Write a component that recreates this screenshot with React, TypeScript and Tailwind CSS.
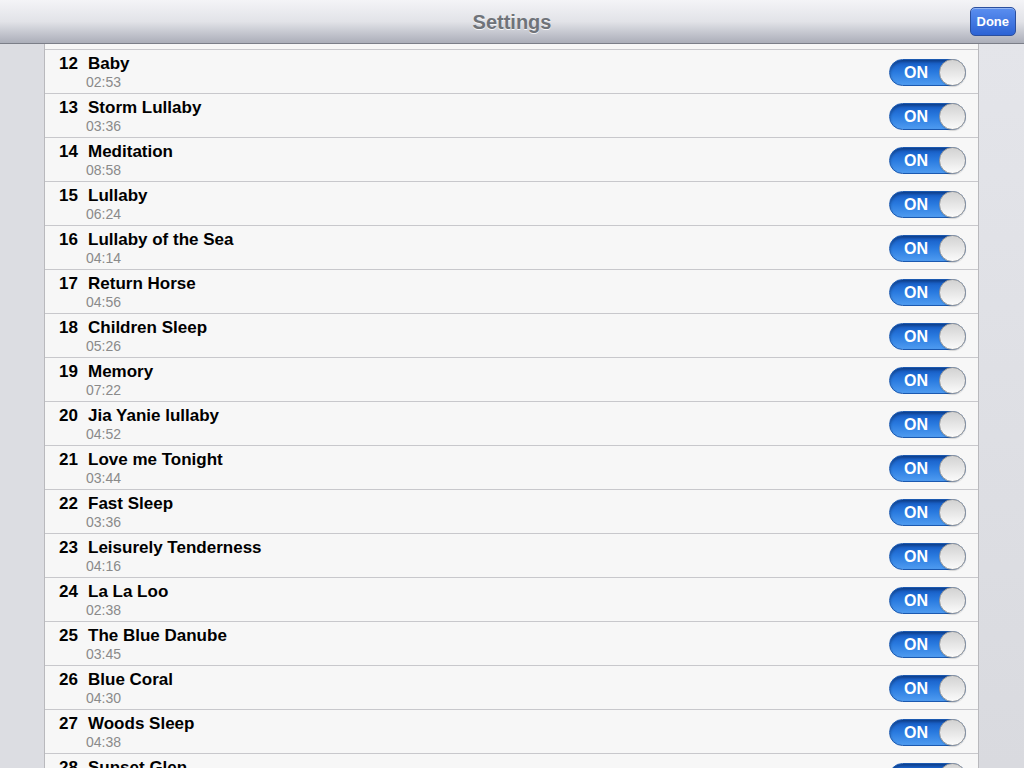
const songs = [
  { n: 12, title: "Baby", time: "02:53" },
  { n: 13, title: "Storm Lullaby", time: "03:36" },
  { n: 14, title: "Meditation", time: "08:58" },
  { n: 15, title: "Lullaby", time: "06:24" },
  { n: 16, title: "Lullaby of the Sea", time: "04:14" },
  { n: 17, title: "Return Horse", time: "04:56" },
  { n: 18, title: "Children Sleep", time: "05:26" },
  { n: 19, title: "Memory", time: "07:22" },
  { n: 20, title: "Jia Yanie lullaby", time: "04:52" },
  { n: 21, title: "Love me Tonight", time: "03:44" },
  { n: 22, title: "Fast Sleep", time: "03:36" },
  { n: 23, title: "Leisurely Tenderness", time: "04:16" },
  { n: 24, title: "La La Loo", time: "02:38" },
  { n: 25, title: "The Blue Danube", time: "03:45" },
  { n: 26, title: "Blue Coral", time: "04:30" },
  { n: 27, title: "Woods Sleep", time: "04:38" },
  { n: 28, title: "Sunset Glen", time: "03:12" },
];

function Toggle() {
  return (
    <div className="relative mt-[2px] w-[77px] h-[27px] rounded-full border border-[#1b59b0] bg-gradient-to-b from-[#1458c2] via-[#2a7be0] to-[#4e9bf0] shadow-[inset_0_2px_3px_rgba(0,0,0,0.3)]">
      <span className="absolute left-[14px] top-[3px] text-[16px] leading-[20px] font-bold text-white">
        ON
      </span>
      <div className="absolute right-[-1px] top-[-1px] w-[27px] h-[27px] rounded-full border border-[#9a9a9a] bg-gradient-to-b from-[#d2d2d2] to-[#fbfbfb] shadow-[0_1px_1px_rgba(0,0,0,0.15)]" />
    </div>
  );
}

export default function App() {
  return (
    <div
      className="w-[1024px] h-[768px] overflow-hidden flex flex-col bg-[#dfe0e5]"
      style={{ fontFamily: '"Liberation Sans", Arial, sans-serif' }}
    >
      <header className="relative h-[44px] shrink-0 flex items-center justify-center bg-gradient-to-b from-[#f4f4f7] via-[#e2e3e8] to-[#abaeb9] border-b border-[#7b7e88]">
        <h1 className="text-[20px] font-bold text-[#6f7379] [text-shadow:0_1px_0_rgba(255,255,255,0.8)]">
          Settings
        </h1>
        <button className="absolute right-[8px] top-[7px] h-[29px] px-[6px] rounded-[5px] border border-[#2b4f9e] bg-gradient-to-b from-[#5b8ff0] to-[#2d63d4] text-[13px] font-bold text-white shadow-[inset_0_1px_0_rgba(255,255,255,0.35)]">
          Done
        </button>
      </header>

      <div className="flex flex-1 min-h-0">
        <div className="w-[44px] shrink-0 bg-[#dcdde2]" />
        <div className="w-[935px] shrink-0 bg-[#f7f7f7] border-x border-[#b9b9bd] overflow-hidden">
          <div className="h-[5px]" />
          {songs.map((s) => (
            <div
              key={s.n}
              className="h-[44px] border-t border-[#c8c8cc] flex items-center pl-[14px] pr-[12px]"
            >
              <div className="flex-1 self-start pt-[4px]">
                <div className="flex text-[17px] leading-[20px] font-bold text-black">
                  <span className="w-[29px]">{s.n}</span>
                  <span>{s.title}</span>
                </div>
                <div className="pl-[27px] text-[14px] leading-[16px] text-[#8a8a8a]">
                  {s.time}
                </div>
              </div>
              <Toggle />
            </div>
          ))}
        </div>
        <div className="flex-1 bg-gradient-to-b from-[#e4e5ea] to-[#d9dadf]" />
      </div>
    </div>
  );
}
